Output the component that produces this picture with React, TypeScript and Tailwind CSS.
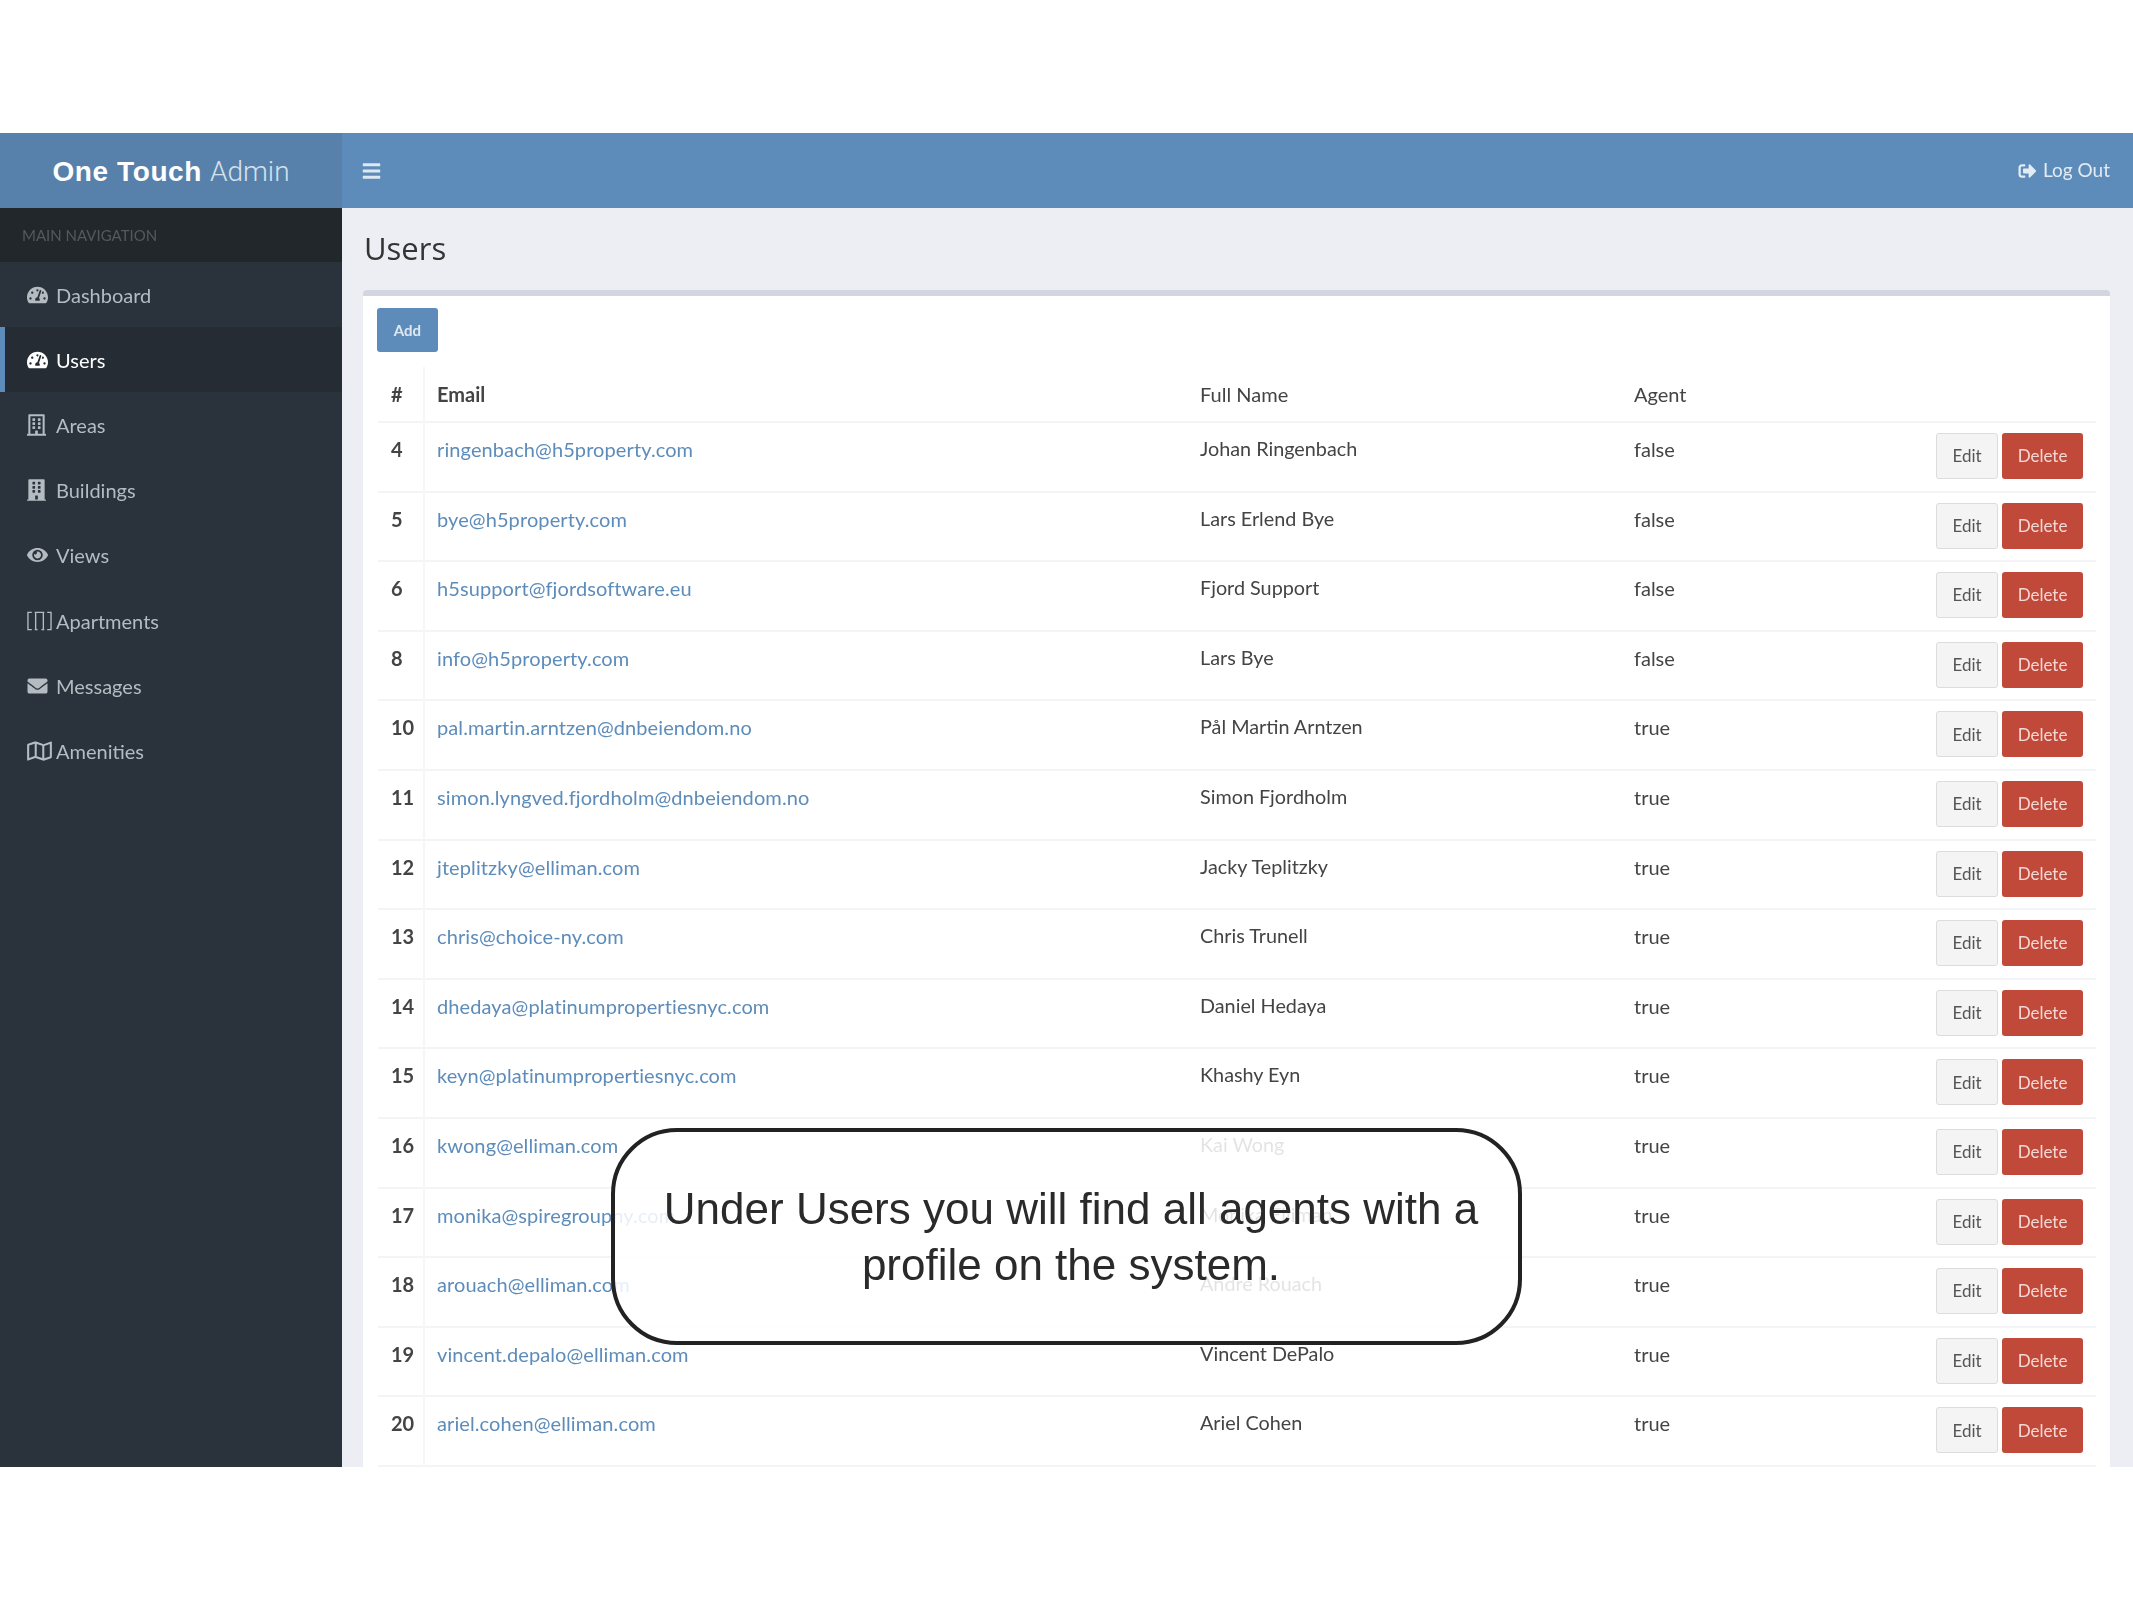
import { FaTachometerAlt, FaRegBuilding, FaBuilding, FaEye, FaEnvelope, FaRegMap, FaBars, FaSignOutAlt } from "react-icons/fa";

const users = [
  { id: 4, email: "ringenbach@h5property.com", name: "Johan Ringenbach", agent: "false" },
  { id: 5, email: "bye@h5property.com", name: "Lars Erlend Bye", agent: "false" },
  { id: 6, email: "h5support@fjordsoftware.eu", name: "Fjord Support", agent: "false" },
  { id: 8, email: "info@h5property.com", name: "Lars Bye", agent: "false" },
  { id: 10, email: "pal.martin.arntzen@dnbeiendom.no", name: "Pål Martin Arntzen", agent: "true" },
  { id: 11, email: "simon.lyngved.fjordholm@dnbeiendom.no", name: "Simon Fjordholm", agent: "true" },
  { id: 12, email: "jteplitzky@elliman.com", name: "Jacky Teplitzky", agent: "true" },
  { id: 13, email: "chris@choice-ny.com", name: "Chris Trunell", agent: "true" },
  { id: 14, email: "dhedaya@platinumpropertiesnyc.com", name: "Daniel Hedaya", agent: "true" },
  { id: 15, email: "keyn@platinumpropertiesnyc.com", name: "Khashy Eyn", agent: "true" },
  { id: 16, email: "kwong@elliman.com", name: "Kai Wong", agent: "true" },
  { id: 17, email: "monika@spiregroupny.com", name: "Monika Elliman", agent: "true" },
  { id: 18, email: "arouach@elliman.com", name: "Andre Rouach", agent: "true" },
  { id: 19, email: "vincent.depalo@elliman.com", name: "Vincent DePalo", agent: "true" },
  { id: 20, email: "ariel.cohen@elliman.com", name: "Ariel Cohen", agent: "true" },
];

function ApartmentIcon() {
  return (
    <svg viewBox="0 0 26 20" className="h-[22px] w-[25px]" fill="none" stroke="currentColor" strokeWidth="1.4">
      <path d="M5 1H1v18h4" />
      <path d="M21 1h4v18h-4" />
      <path d="M8 1h10M9 1v18M17 1v18M8 19h3M15 19h3" />
    </svg>
  );
}

const nav = [
  { label: "Dashboard", icon: <FaTachometerAlt className="h-[20px] w-[21px]" /> },
  { label: "Users", icon: <FaTachometerAlt className="h-[20px] w-[21px]" />, active: true },
  { label: "Areas", icon: <FaRegBuilding className="h-[22px] w-[19px]" /> },
  { label: "Buildings", icon: <FaBuilding className="h-[22px] w-[19px]" /> },
  { label: "Views", icon: <FaEye className="h-[20px] w-[21px]" /> },
  { label: "Apartments", icon: <ApartmentIcon /> },
  { label: "Messages", icon: <FaEnvelope className="h-[20px] w-[21px]" /> },
  { label: "Amenities", icon: <FaRegMap className="h-[22px] w-[25px]" /> },
];

export default function App() {
  return (
    <div className="relative h-[1600px] w-[2133px] bg-white pt-[133px] font-['Lato','Open_Sans',sans-serif]">
      <div className="flex h-[1334px] flex-col overflow-hidden blur-[0.5px]">
        <header className="flex h-[75px] shrink-0 bg-[#5d8cba] text-white">
          <div className="flex w-[342px] items-center justify-center bg-[#5781ab] pt-[2px] text-[28px]">
            <span className="font-['Liberation_Sans',sans-serif] font-bold tracking-[0.6px]">One Touch</span>
            <span className="ml-[8px] font-['Roboto',sans-serif] font-light text-[#d5e1ec]">Admin</span>
          </div>
          <div className="flex flex-1 items-center justify-between pl-[20px] pr-[23px]">
            <FaBars className="h-[20px] w-[19px] text-[#dfe8f1]" />
            <div className="flex items-center gap-[6px] text-[19px] text-[#e3ebf3]">
              <FaSignOutAlt className="h-[18px] w-[19px]" />
              Log Out
            </div>
          </div>
        </header>

        <div className="flex flex-1">
          <aside className="w-[342px] shrink-0 bg-[#2a323b]">
            <div className="flex h-[54px] items-center bg-[#22272c] pl-[22px] text-[15px] text-[#525a60]">MAIN NAVIGATION</div>
            {nav.map((item) => (
              <div
                key={item.label}
                className={
                  item.active
                    ? "flex h-[65.2px] items-center border-l-[5px] border-[#5d8cba] bg-[#252c33] pl-[22px] text-[20px] text-white"
                    : "flex h-[65.2px] items-center pl-[27px] text-[20px] text-[#b4bcc2]"
                }
              >
                <span className="w-[29px] shrink-0">{item.icon}</span>
                {item.label}
              </div>
            ))}
          </aside>

          <main className="flex min-w-0 flex-1 flex-col bg-[#eceef4] pl-[21px] pr-[23px] pt-[19px]">
            <h1 className="mb-[20px] h-[43px] pl-[1px] font-['Open_Sans',sans-serif] text-[31px] leading-[43px] text-[#333]">Users</h1>
            <section className="flex-1 rounded-t-[4px] border-t-[6px] border-[#d2d6de] bg-white pl-[14px] pr-[14px] pt-[12px]">
              <button className="block h-[44px] w-[61px] rounded-[3px] bg-[#5d8cba] text-[15px] font-bold text-[#dfe8f1]">Add</button>
              <table className="ml-[1px] mt-[15px] w-[1718px] table-fixed border-collapse text-[20px] text-[#444]">
                <thead>
                  <tr className="h-[55px] border-b-2 border-[#f3f4f5] text-left">
                    <th className="w-[46px] border-r-2 border-[#f5f6f7] pl-[13px] font-bold">#</th>
                    <th className="w-[764px] pl-[12px] font-bold">Email</th>
                    <th className="w-[434px] pl-[12px] font-normal">Full Name</th>
                    <th className="w-[200px] pl-[12px] font-normal">Agent</th>
                    <th />
                  </tr>
                </thead>
                <tbody>
                  {users.map((u) => (
                    <tr key={u.id} className="h-[69.6px] border-b-2 border-[#f3f4f5] align-top">
                      <td className="border-r-2 border-[#f5f6f7] pl-[13px] pt-[11px] font-bold">{u.id}</td>
                      <td className="pl-[12px] pt-[11px] tracking-[0.1px] text-[#5d8cba]">{u.email}</td>
                      <td className="pl-[12px] pt-[11px] text-[19.8px]">{u.name}</td>
                      <td className="pl-[12px] pt-[11px]">{u.agent}</td>
                      <td className="pr-[13px] pt-[10px]">
                        <div className="flex justify-end gap-[4px]">
                          <button className="h-[46px] w-[62px] rounded-[3px] border border-[#dcdcdc] bg-[#f4f4f4] text-[17px] text-[#555]">Edit</button>
                          <button className="h-[46px] w-[81px] rounded-[3px] bg-[#c0493a] text-[17px] text-[#f3d9d5]">Delete</button>
                        </div>
                      </td>
                    </tr>
                  ))}
                </tbody>
              </table>
            </section>
          </main>
        </div>
      </div>

      <div className="absolute left-[611px] top-[1128px] flex h-[217px] w-[911px] items-center justify-center rounded-[66px] border-[4px] border-[#222] bg-white/85 pl-[9px] text-center font-['Liberation_Sans',sans-serif] text-[44px] leading-[56px] text-[#2a2a2a]">
        <p>Under Users you will find all agents with a<br />profile on the system.</p>
      </div>
    </div>
  );
}
